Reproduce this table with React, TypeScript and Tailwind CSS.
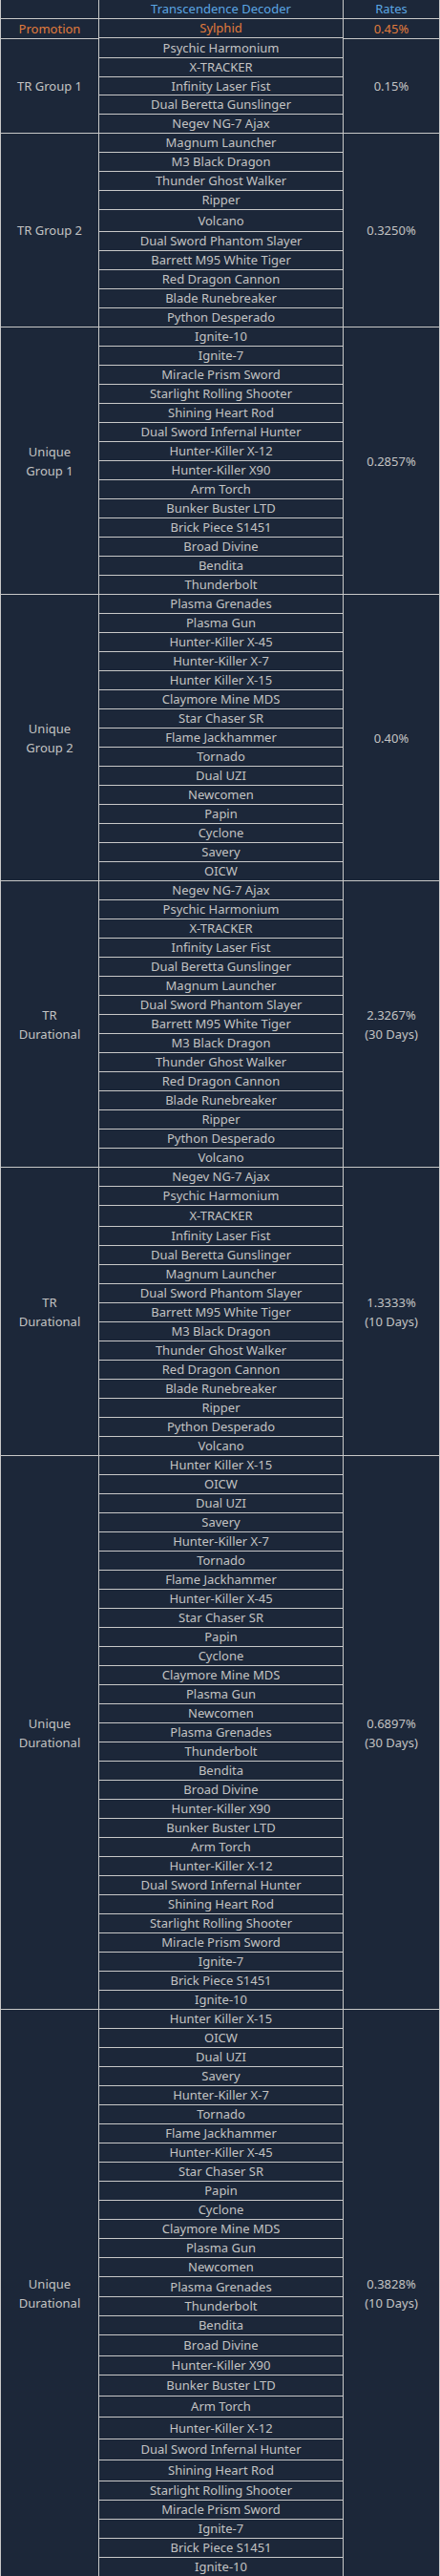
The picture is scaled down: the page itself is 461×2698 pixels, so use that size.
import React from "react";

type Item = [string, number?];
type Group = { label: string[]; rate: string[]; orange?: boolean; items: Item[] };

const H: Record<number, string> = {
  19: "h-[19px]",
  20: "h-[20px]",
  21: "h-[21px]",
  22: "h-[22px]",
  23: "h-[23px]",
};

const trList: Item[] = [
  ["Negev NG-7 Ajax"],
  ["Psychic Harmonium"],
  ["X-TRACKER"],
  ["Infinity Laser Fist"],
  ["Dual Beretta Gunslinger"],
  ["Magnum Launcher"],
  ["Dual Sword Phantom Slayer"],
  ["Barrett M95 White Tiger"],
  ["M3 Black Dragon"],
  ["Thunder Ghost Walker"],
  ["Red Dragon Cannon"],
  ["Blade Runebreaker"],
  ["Ripper"],
  ["Python Desperado"],
  ["Volcano"],
];

const uniqueDur: string[] = [
  "Hunter Killer X-15",
  "OICW",
  "Dual UZI",
  "Savery",
  "Hunter-Killer X-7",
  "Tornado",
  "Flame Jackhammer",
  "Hunter-Killer X-45",
  "Star Chaser SR",
  "Papin",
  "Cyclone",
  "Claymore Mine MDS",
  "Plasma Gun",
  "Newcomen",
  "Plasma Grenades",
  "Thunderbolt",
  "Bendita",
  "Broad Divine",
  "Hunter-Killer X90",
  "Bunker Buster LTD",
  "Arm Torch",
  "Hunter-Killer X-12",
  "Dual Sword Infernal Hunter",
  "Shining Heart Rod",
  "Starlight Rolling Shooter",
  "Miracle Prism Sword",
  "Ignite-7",
  "Brick Piece S1451",
  "Ignite-10",
];

const ud10Heights: Record<string, number> = {
  "Plasma Grenades": 21,
  "Broad Divine": 22,
  "Bunker Buster LTD": 22,
  "Arm Torch": 22,
  "Hunter-Killer X-12": 23,
  "Dual Sword Infernal Hunter": 22,
  "Shining Heart Rod": 22,
};

const groups: Group[] = [
  { label: ["Promotion"], rate: ["0.45%"], orange: true, items: [["Sylphid"]] },
  {
    label: ["TR Group 1"],
    rate: ["0.15%"],
    items: [
      ["Psychic Harmonium"],
      ["X-TRACKER"],
      ["Infinity Laser Fist", 19],
      ["Dual Beretta Gunslinger"],
      ["Negev NG-7 Ajax"],
    ],
  },
  {
    label: ["TR Group 2"],
    rate: ["0.3250%"],
    items: [
      ["Magnum Launcher"],
      ["M3 Black Dragon"],
      ["Thunder Ghost Walker"],
      ["Ripper"],
      ["Volcano", 23],
      ["Dual Sword Phantom Slayer"],
      ["Barrett M95 White Tiger"],
      ["Red Dragon Cannon"],
      ["Blade Runebreaker"],
      ["Python Desperado"],
    ],
  },
  {
    label: ["Unique", "Group 1"],
    rate: ["0.2857%"],
    items: [
      ["Ignite-10"],
      ["Ignite-7"],
      ["Miracle Prism Sword"],
      ["Starlight Rolling Shooter"],
      ["Shining Heart Rod"],
      ["Dual Sword Infernal Hunter"],
      ["Hunter-Killer X-12"],
      ["Hunter-Killer X90"],
      ["Arm Torch"],
      ["Bunker Buster LTD"],
      ["Brick Piece S1451"],
      ["Broad Divine"],
      ["Bendita"],
      ["Thunderbolt"],
    ],
  },
  {
    label: ["Unique", "Group 2"],
    rate: ["0.40%"],
    items: [
      ["Plasma Grenades"],
      ["Plasma Gun"],
      ["Hunter-Killer X-45"],
      ["Hunter-Killer X-7"],
      ["Hunter Killer X-15"],
      ["Claymore Mine MDS"],
      ["Star Chaser SR"],
      ["Flame Jackhammer"],
      ["Tornado"],
      ["Dual UZI"],
      ["Newcomen"],
      ["Papin"],
      ["Cyclone"],
      ["Savery"],
      ["OICW"],
    ],
  },
  { label: ["TR", "Durational"], rate: ["2.3267%", "(30 Days)"], items: trList },
  {
    label: ["TR", "Durational"],
    rate: ["1.3333%", "(10 Days)"],
    items: trList.map(([n]) => [n, n === "X-TRACKER" ? 22 : undefined] as Item),
  },
  {
    label: ["Unique", "Durational"],
    rate: ["0.6897%", "(30 Days)"],
    items: uniqueDur.map((n) => [n] as Item),
  },
  {
    label: ["Unique", "Durational"],
    rate: ["0.3828%", "(10 Days)"],
    items: uniqueDur.map((n) => [n, ud10Heights[n]] as Item),
  },
];

const font = { fontFamily: '"Noto Sans", "Open Sans", sans-serif' };

export default function App() {
  return (
    <div
      className="w-[461px] bg-[#1c2739] text-[13px] text-[#c3c3c3] border-l border-r border-[#c8c8c8] leading-[19px]"
      style={font}
    >
      <div className="flex h-[20px] border-b border-[#c8c8c8]">
        <div className="w-[103px] border-r border-[#c8c8c8]" />
        <div className="w-[256px] border-r border-[#c8c8c8] flex items-center justify-center text-[#5ba6e3]">
          Transcendence Decoder
        </div>
        <div className="flex-1 flex items-center justify-center text-[#5ba6e3]">Rates</div>
      </div>
      {groups.map((g, gi) => (
        <div key={gi} className="flex">
          <div
            className={`w-[103px] border-r border-b border-[#c8c8c8] flex flex-col items-center justify-center text-center leading-[20px] ${
              g.orange ? "text-[#e07b3c]" : ""
            }`}
          >
            {g.label.map((l, i) => (
              <div key={i}>{l}</div>
            ))}
          </div>
          <div className="w-[256px] border-r border-[#c8c8c8] flex flex-col">
            {g.items.map(([n, h], i) => (
              <div
                key={i}
                className={`${H[h ?? 20]} border-b border-[#c8c8c8] flex items-center justify-center ${
                  g.orange ? "text-[#e07b3c]" : ""
                }`}
              >
                {n}
              </div>
            ))}
          </div>
          <div
            className={`flex-1 border-b border-[#c8c8c8] flex flex-col items-center justify-center text-center leading-[20px] ${
              g.orange ? "text-[#e07b3c]" : ""
            }`}
          >
            {g.rate.map((l, i) => (
              <div key={i}>{l}</div>
            ))}
          </div>
        </div>
      ))}
    </div>
  );
}
